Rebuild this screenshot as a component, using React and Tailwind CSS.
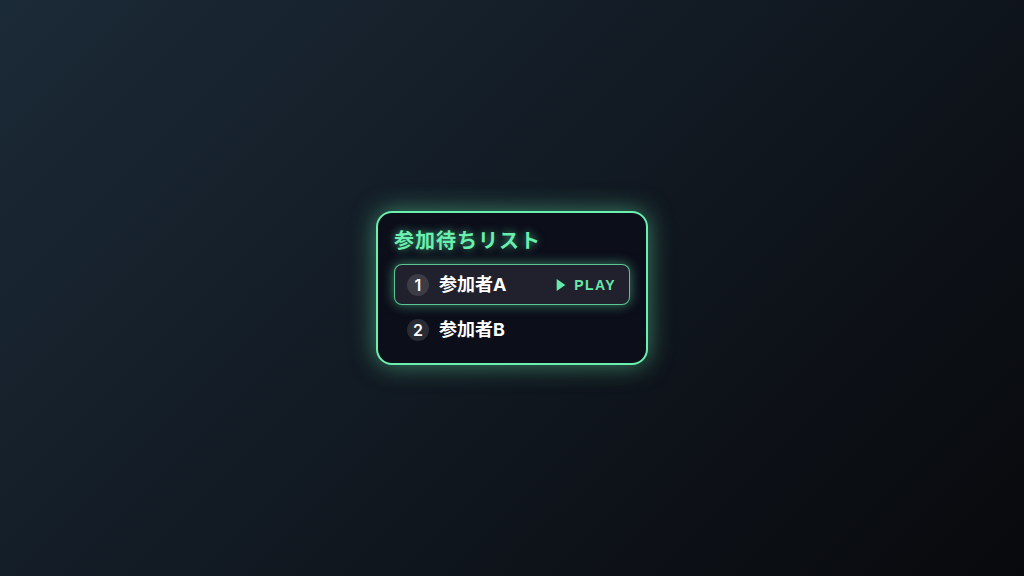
const entries = [
  { id: 1, name: '参加者A', playing: true },
  { id: 2, name: '参加者B', playing: false },
];

function Entry({ entry }) {
  return (
    <li
      className={
        'flex items-center rounded-lg border py-2 pr-[13px] pl-3 ' +
        (entry.playing
          ? 'border-[#69f0ae]/80 bg-[#20212c] shadow-[0_0_12px_rgba(105,240,174,0.5)]'
          : 'border-transparent')
      }
    >
      <span className="flex size-[22px] items-center justify-center rounded-full bg-white/12 font-['Inter',sans-serif] text-base leading-none font-semibold">
        {entry.id}
      </span>
      <span className="ml-[10px] grow font-['Inter','Noto_Sans_CJK_JP',sans-serif] text-lg leading-[23px] font-bold">
        {entry.name}
      </span>
      {entry.playing && (
        <span className="flex items-center gap-2 text-sm font-bold tracking-widest text-[#69e8ab]">
          <svg viewBox="0 0 10 12" className="h-3 w-[10px]" fill="currentColor" aria-hidden="true">
            <path d="M0.7 0 L9.3 6 L0.7 12 Z" />
          </svg>
          PLAY
        </span>
      )}
    </li>
  );
}

export default function App() {
  return (
    <main className="flex min-h-screen items-center justify-center bg-linear-[135deg,#1b2a37_0%,#10171f_55%,#08090c_100%] p-4 font-['Liberation_Sans','Noto_Sans_CJK_JP',sans-serif] text-white">
      <section className="w-full max-w-[272px] rounded-2xl border-2 border-[#69f0ae] bg-[#0c0e1a] px-4 pt-4 pb-[13px] shadow-[0_0_24px_rgba(105,240,174,0.5)]">
        <h1 className="mb-[11px] text-xl leading-6 font-bold tracking-[1px] text-[#69f0ae] [text-shadow:0_0_8px_rgba(105,240,174,0.65)]">
          参加待ちリスト
        </h1>
        <ol className="flex flex-col gap-1">
          {entries.map((entry) => (
            <Entry key={entry.id} entry={entry} />
          ))}
        </ol>
      </section>
    </main>
  );
}
